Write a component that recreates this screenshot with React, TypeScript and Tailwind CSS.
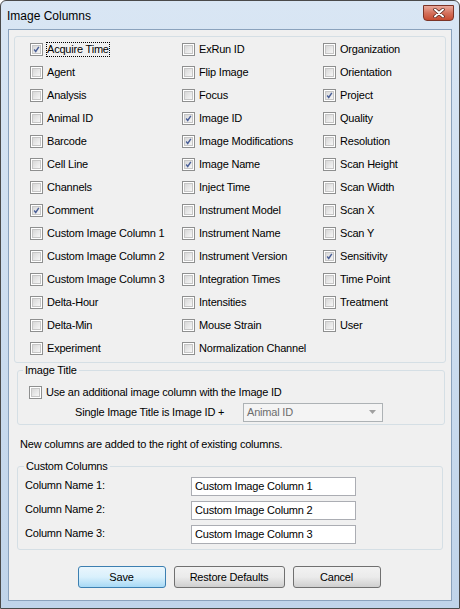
import React from 'react';

const font = { fontFamily: '"Liberation Sans", Arial, sans-serif' };

const columns: [string, boolean][][] = [
  [
    ['Acquire Time', true],
    ['Agent', false],
    ['Analysis', false],
    ['Animal ID', false],
    ['Barcode', false],
    ['Cell Line', false],
    ['Channels', false],
    ['Comment', true],
    ['Custom Image Column 1', false],
    ['Custom Image Column 2', false],
    ['Custom Image Column 3', false],
    ['Delta-Hour', false],
    ['Delta-Min', false],
    ['Experiment', false],
  ],
  [
    ['ExRun ID', false],
    ['Flip Image', false],
    ['Focus', false],
    ['Image ID', true],
    ['Image Modifications', true],
    ['Image Name', true],
    ['Inject Time', false],
    ['Instrument Model', false],
    ['Instrument Name', false],
    ['Instrument Version', false],
    ['Integration Times', false],
    ['Intensities', false],
    ['Mouse Strain', false],
    ['Normalization Channel', false],
  ],
  [
    ['Organization', false],
    ['Orientation', false],
    ['Project', true],
    ['Quality', false],
    ['Resolution', false],
    ['Scan Height', false],
    ['Scan Width', false],
    ['Scan X', false],
    ['Scan Y', false],
    ['Sensitivity', true],
    ['Time Point', false],
    ['Treatment', false],
    ['User', false],
  ],
];

function Box({ checked }: { checked: boolean }) {
  return (
    <span className="w-[13px] h-[13px] shrink-0 border border-[#8e8f8f] bg-white p-[1px]">
      <span className="flex items-center justify-center w-full h-full border border-[#c6c6c6] bg-gradient-to-br from-[#d8d8d8] to-[#f6f6f6]">
        {checked && (
          <svg width="9" height="9" viewBox="0 0 9 9">
            <path d="M1.5 4.5 L3.5 7 L7.5 1" fill="none" stroke="#4a5f97" strokeWidth="1.8" />
          </svg>
        )}
      </span>
    </span>
  );
}

function Check({ label, checked, focused }: { label: string; checked: boolean; focused?: boolean }) {
  return (
    <div className="flex items-center h-[23px] gap-[4px]">
      <Box checked={checked} />
      <span className={focused ? 'outline-1 outline-dotted outline-black leading-[13px]' : 'leading-[13px]'}>
        {label}
      </span>
    </div>
  );
}

function Button({ label, primary, width }: { label: string; primary?: boolean; width: string }) {
  return (
    <button
      className={
        'h-[22px] rounded-[3px] border text-[11px] text-black ' +
        width +
        (primary
          ? ' border-[#3c7fb1] bg-gradient-to-b from-[#eaf6fd] via-[#d9f0fc] to-[#a7d9f5]'
          : ' border-[#707070] bg-gradient-to-b from-[#f2f2f2] via-[#ebebeb] to-[#cfcfcf]')
      }
    >
      {label}
    </button>
  );
}

export default function App() {
  return (
    <div className="w-[460px] h-[609px] flex flex-col rounded-t-[6px] border border-[#4a4a4a] bg-gradient-to-b from-[#d9e6f4] to-[#c0d4ea] text-[11px] text-black tracking-[-0.2px]" style={font}>
      {/* Title bar */}
      <div className="h-[28px] flex items-start justify-between pl-[6px] pr-[5px]">
        <span className="text-[12px] tracking-normal mt-[6px]">Image Columns</span>
        <div className="mt-[4px] w-[31px] h-[16px] rounded-b-[4px] border border-[#7b3427] bg-gradient-to-b from-[#e9a99b] via-[#d4715c] to-[#c64a2f] flex items-center justify-center">
          <svg width="12" height="10" viewBox="0 0 12 10">
            <path d="M2 1.5 L10 8.5 M10 1.5 L2 8.5" stroke="#4d2018" strokeWidth="3.4" strokeLinecap="round" />
            <path d="M2 1.5 L10 8.5 M10 1.5 L2 8.5" stroke="#fff" strokeWidth="2" strokeLinecap="round" />
          </svg>
        </div>
      </div>

      {/* Client area */}
      <div className="flex-1 mx-[7px] mb-[7px] border border-[#8aa2bd] bg-[#f0f0f0] flex flex-col pt-[6px] px-[5px]">
        {/* Columns group */}
        <div className="rounded-[3px] border border-[#d5dfe5] pl-[15px] pt-[1px] pb-[2px] flex">
          {columns.map((col, ci) => (
            <div key={ci} className={ci === 0 ? 'w-[152px]' : ci === 1 ? 'w-[141px]' : 'flex-1'}>
              {col.map(([label, checked], ri) => (
                <Check key={label} label={label} checked={checked} focused={ci === 0 && ri === 0} />
              ))}
            </div>
          ))}
        </div>

        {/* Image Title */}
        <fieldset className="ml-[3px] mr-[1px] rounded-[3px] border border-[#d5dfe5] pb-[2px]">
          <legend className="ml-[5px] px-[2px] leading-[15px]">Image Title</legend>
          <div className="pl-[11px]">
            <div className="flex items-center h-[20px] gap-[4px] mt-[4px]">
              <Box checked={false} />
              <span>Use an additional image column with the Image ID</span>
            </div>
            <div className="flex items-center h-[20px] pl-[46px]">
              <span className="w-[168px]">Single Image Title is Image ID +</span>
              <div className="w-[140px] h-[19px] border border-[#adb2b5] bg-[#f4f4f4] flex items-center justify-between pl-[3px] pr-[6px] text-[#6d6d6d]">
                <span>Animal ID</span>
                <svg width="7" height="4" viewBox="0 0 7 4">
                  <path d="M0 0 H7 L3.5 4 Z" fill="#a0a0a0" />
                </svg>
              </div>
            </div>
          </div>
        </fieldset>

        <p className="mt-[12px] ml-[6px] leading-[15px]">New columns are added to the right of existing columns.</p>

        {/* Custom Columns */}
        <fieldset className="mt-[7px] ml-[3px] mr-[3px] rounded-[3px] border border-[#d5dfe5] pb-[5px]">
          <legend className="ml-[6px] px-[2px] leading-[15px]">Custom Columns</legend>
          <div className="flex flex-col gap-[5px] mt-[3px] pl-[7px]">
            {[1, 2, 3].map((n) => (
              <div key={n} className="flex items-center">
                <span className="w-[166px] -mt-[2px]">Column Name {n}:</span>
                <div className="w-[165px] h-[19px] border border-[#abadb3] bg-white flex items-center pl-[3px]">
                  Custom Image Column {n}
                </div>
              </div>
            ))}
          </div>
        </fieldset>

        {/* Buttons */}
        <div className="mt-[16px] flex justify-center gap-[8px] pr-[2px]">
          <Button label="Save" primary width="w-[88px]" />
          <Button label="Restore Defaults" width="w-[111px]" />
          <Button label="Cancel" width="w-[88px]" />
        </div>
      </div>
    </div>
  );
}
